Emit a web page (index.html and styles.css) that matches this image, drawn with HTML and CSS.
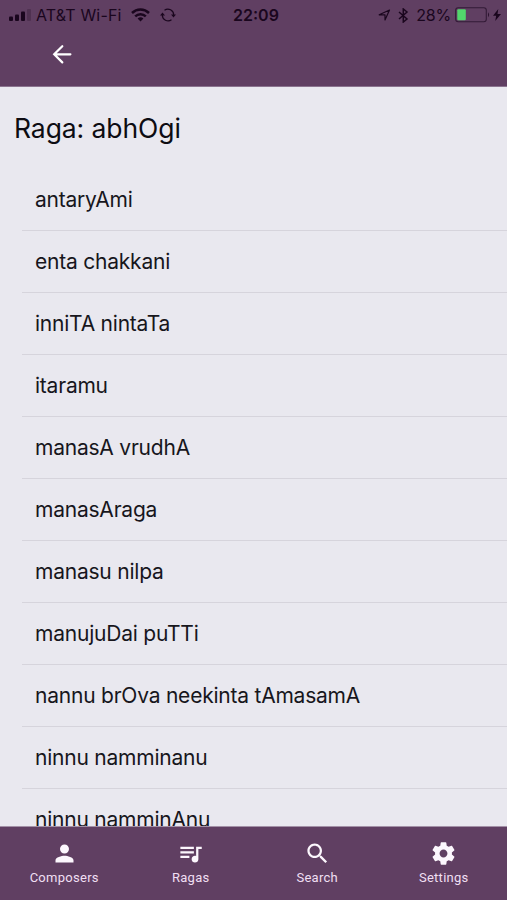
FILE: index.html
```html
<!DOCTYPE html>
<html lang="en">
<head>
<meta charset="utf-8">
<title>Raga: abhOgi</title>
<link rel="stylesheet" href="styles.css">
</head>
<body>
<div class="app">
  <header class="header">
    <div class="status">
      <div class="status-left">
        <svg class="signal" width="23" height="12" viewBox="0 0 23 12"><rect x="0" y="7.5" width="4" height="4.5" rx="1"/><rect x="6" y="5.5" width="4" height="6.5" rx="1"/><rect x="12" y="2.5" width="4" height="9.5" rx="1"/><rect x="18" y="0" width="4" height="12" rx="1" opacity=".25"/></svg>
        <span class="carrier">AT&amp;T Wi-Fi</span>
        <svg class="wifi" width="19" height="14" viewBox="0 0 19 14" fill="none" stroke="currentColor" stroke-width="2.5"><path d="M1 5a12.2 12.2 0 0 1 17 0M4.2 8.3a7.6 7.6 0 0 1 10.600 0"/><path d="M9.500 13.500L6.600 10.600a4.200 4.200 0 0 1 5.800 0z" fill="currentColor" stroke="none"/></svg>
        <svg class="sync" width="16" height="14" viewBox="0 0 16 14" fill="none" stroke="currentColor" stroke-width="1.200"><path d="M4.500 2.300A5.800 5.800 0 0 1 13.700 7M11.500 11.700A5.800 5.800 0 0 1 2.300 7"/><path d="M11 6.500h5l-2.500 3zM0 7.500h5L2.500 4.500z" fill="currentColor" stroke="none"/></svg>
      </div>
      <span class="clock">22:09</span>
      <div class="status-right">
        <svg class="location" width="13" height="12" viewBox="0 0 13 12" fill="none" stroke="currentColor" stroke-width="1.200" stroke-linejoin="round"><path d="M1.200 5.800L11.500 1 7 11V5.800z"/></svg>
        <svg class="bluetooth" width="11" height="15" viewBox="0 0 11 15" fill="none" stroke="currentColor" stroke-width="1.500"><path d="M1 4l8 7-3.700 3V1L9 4l-8 7"/></svg>
        <span class="percent">28%</span>
        <svg class="battery" width="36" height="16" viewBox="0 0 36 16"><rect x=".7" y=".7" width="30.600" height="14" rx="2.500" fill="none" stroke="currentColor" stroke-opacity=".65" stroke-width="1.100"/><rect x="2.300" y="2.200" width="8.500" height="11" rx="1" fill="#52d66c"/><path d="M33 5.200q2.200 2.500 0 5z" opacity=".75"/></svg>
        <svg class="bolt" width="8" height="12" viewBox="0 0 8 12"><path d="M5.300 0L0 6.700h3.200L2.200 12 8 5H4.500z"/></svg>
      </div>
    </div>
    <div class="toolbar">
      <svg width="20" height="20" viewBox="0 0 20 20" fill="none" stroke="#fff" stroke-width="2.200" stroke-linecap="round"><path d="M18.400 10.300H2.500M10.300 2.200L2.200 10.300l8.100 8.100"/></svg>
    </div>
  </header>
  <main class="content">
    <h1 class="title">Raga: abhOgi</h1>
    <ul class="list">
      <li>antaryAmi</li>
      <li>enta chakkani</li>
      <li>inniTA nintaTa</li>
      <li>itaramu</li>
      <li>manasA vrudhA</li>
      <li>manasAraga</li>
      <li>manasu nilpa</li>
      <li>manujuDai puTTi</li>
      <li>nannu brOva neekinta tAmasamA</li>
      <li>ninnu namminanu</li>
      <li>ninnu namminAnu</li>
    </ul>
  </main>
  <nav class="tabs">
    <a class="tab"><svg viewBox="0 0 24 24"><path d="M12 12c2.210 0 4-1.790 4-4s-1.790-4-4-4-4 1.790-4 4 1.790 4 4 4zm0 2c-2.670 0-8 1.340-8 4v2h16v-2c0-2.660-5.330-4-8-4z"/></svg><span>Composers</span></a>
    <a class="tab"><svg viewBox="0 0 24 24"><path d="M15 6H3v2h12V6zm0 4H3v2h12v-2zM3 16h8v-2H3v2zM17 6v8.180c-.310-.110-.650-.180-1-.180-1.660 0-3 1.340-3 3s1.340 3 3 3 3-1.340 3-3V8h3V6h-5z"/></svg><span>Ragas</span></a>
    <a class="tab"><svg viewBox="0 0 24 24"><path d="M15.500 14h-.790l-.280-.270C15.410 12.590 16 11.110 16 9.500 16 5.910 13.090 3 9.500 3S3 5.910 3 9.500 5.910 16 9.500 16c1.610 0 3.090-.590 4.230-1.570l.270.280v.790l5 4.990L20.490 19l-4.990-5zm-6 0C7.010 14 5 11.990 5 9.500S7.010 5 9.500 5 14 7.010 14 9.500 11.990 14 9.500 14z"/></svg><span>Search</span></a>
    <a class="tab"><svg viewBox="0 0 24 24"><path d="M19.430 12.980c.040-.320.070-.640.070-.980s-.030-.660-.070-.980l2.110-1.650c.190-.150.240-.420.120-.640l-2-3.460c-.120-.220-.390-.300-.610-.220l-2.490 1c-.520-.400-1.080-.730-1.690-.980l-.380-2.650C14.460 2.180 14.250 2 14 2h-4c-.250 0-.460.180-.490.420l-.380 2.650c-.610.250-1.170.590-1.690.980l-2.490-1c-.230-.090-.490 0-.610.220l-2 3.460c-.130.220-.070.490.120.640l2.110 1.650c-.040.320-.070.650-.070.980s.030.660.070.980l-2.110 1.650c-.190.150-.240.420-.120.640l2 3.460c.120.220.390.300.610.220l2.490-1c.520.400 1.080.730 1.690.980l.380 2.650c.030.240.240.420.490.420h4c.250 0 .460-.180.490-.420l.380-2.650c.610-.250 1.170-.590 1.690-.980l2.490 1c.230.090.490 0 .610-.220l2-3.460c.120-.220.070-.490-.120-.640l-2.110-1.650zM12 15.500c-1.930 0-3.500-1.570-3.500-3.500s1.570-3.500 3.500-3.500 3.500 1.570 3.500 3.500-1.570 3.500-3.500 3.500z"/></svg><span>Settings</span></a>
  </nav>
</div>
</body>
</html>
```
FILE: styles.css
```css
* { box-sizing: border-box; }
body { margin: 0; font-family: Inter, "Liberation Sans", sans-serif; }
svg { display: block; flex: none; }
.app { width: 507px; height: 900px; display: flex; flex-direction: column; overflow: hidden; background: #e9e8ef; }
.header { height: 87px; flex: none; background: #603f62; border-bottom: 1px solid #8b748f; }
.status { height: 30px; display: grid; grid-template-columns: 1fr auto 1fr; align-items: center; padding: 0 6px 0 9px; color: #1a061e; font-size: 16px; }
.status svg { fill: currentColor; }
.status svg[fill="none"] { fill: none; }
.status-left, .status-right { display: flex; align-items: center; white-space: nowrap; }
.status-right { justify-content: flex-end; }
.carrier { margin-left: 4px; letter-spacing: 0.15px; }
.wifi { margin-left: 9px; }
.sync { margin-left: 10px; }
.clock { font-weight: 600; padding-left: 2px; }
.location { margin-right: 7px; }
.percent { margin-left: 7px; letter-spacing: -0.2px; }
.battery { margin-left: 4px; }
.bolt { margin-left: 2px; }
.toolbar { display: flex; padding: 14px 0 0 52px; }
.content { flex: 1; min-height: 0; overflow: hidden; color: #17161c; }
.title { margin: 0; padding: 20px 0 0 14px; height: 82px; font-size: 26.5px; line-height: 42px; font-weight: 400; letter-spacing: -0.08px; color: #0d0c12; }
.list { margin: 0; padding: 0 0 0 22px; list-style: none; }
.list li { height: 62px; padding-left: 13px; border-bottom: 1px solid #d6d4dc; font-size: 21px; line-height: 62px; letter-spacing: -0.22px; white-space: nowrap; }
.tabs { height: 74px; flex: none; display: grid; grid-template-columns: repeat(4, 1fr); padding-left: 1px; background: #603f62; border-top: 1px solid #a391a7; }
.tab { display: flex; flex-direction: column; align-items: center; padding-top: 13px; color: #f0dff3; font: 13px/16px Roboto, sans-serif; letter-spacing: 0.28px; }
.tab svg { width: 27px; height: 27px; fill: #fcf7fd; }
.tab span { margin-top: 3px; }
```
